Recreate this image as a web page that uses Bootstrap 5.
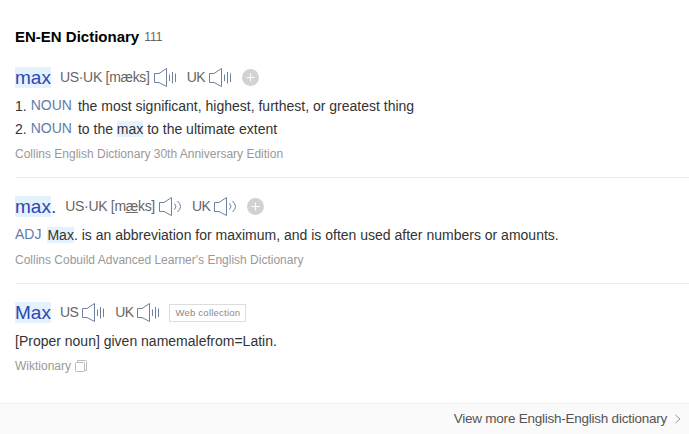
<!DOCTYPE html>
<html lang="en">
<head>
<meta charset="utf-8">
<meta name="viewport" content="width=device-width, initial-scale=1">
<title>EN-EN Dictionary</title>
<link href="https://cdn.jsdelivr.net/npm/bootstrap@5.3.0/dist/css/bootstrap.min.css" rel="stylesheet">
<style>
body{font-family:"Liberation Sans",Arial,sans-serif;font-size:14px;color:#333;background:#fff}
.dict{height:434px}
.dict-head{height:49px;padding:24px 15px 0;line-height:25px}
.dict-head h1{font-size:15px;line-height:25px;color:#000}
.dict-head span{font-size:12px;color:#666;margin-left:5px;line-height:27px}
.entry{padding:16px 0 13px;margin:0 0 0 15px;border-bottom:1px solid #ededed}
.entry:last-child{border-bottom:0}
.head-row{height:25px;color:#666;margin-bottom:5px;line-height:25px;letter-spacing:-.3px}
.region{letter-spacing:-.6px}
.headword{font-size:19px;line-height:21px;color:#2b46b8;margin-right:9px;letter-spacing:0}
.hit{background:#e3f2fd}
.speaker{width:25px;height:25px;margin:0 9px 0 3px;flex:none;fill:none;stroke:#6f819f}
.sense{line-height:23px}
.pos{color:#5f7da8;margin:0 6px 0 4px;position:relative;top:-1px}
.pos.first{margin-left:0}
.source{font-size:12px;line-height:20px;margin-top:3px;color:#999}
.add-btn{width:17px;height:17px;flex:none}
.tag{font-size:9.5px;letter-spacing:.24px;line-height:16px;height:18px;padding:0 5px;border:1px solid #ddd;color:#888}
.more{height:31px;font-size:13.5px;letter-spacing:-.24px;background:#fafafa;border-top:1px solid #eee;color:#555;padding-right:8px}
</style>
</head>
<body>
<svg class="d-none">
<symbol id="cone" viewBox="0 0 25 25"><path d="M1.5 17.5V8.5H6L13.5 3.5V21.5L6 17.5H1.5"/></symbol>
<symbol id="bars" viewBox="0 0 25 25"><path d="M16.5 9.5V16M19.5 7V18.5M22.5 8.5V17"/></symbol>
<symbol id="waves" viewBox="0 0 25 25"><path d="M16.5 9.5Q19.5 12.5 16.5 15.5M19.5 7Q25.5 12.5 19.5 18"/></symbol>
<symbol id="plus" viewBox="0 0 17 17"><circle cx="8.5" cy="8.5" r="8.5" fill="#d2d2d2"/><path d="M4.5 8.5H12.5M8.5 4.5V12.5" stroke="#fff" fill="none"/></symbol>
</svg>
<main class="dict d-flex flex-column">
<header class="dict-head d-flex"><h1 class="fw-bold mb-0">EN-EN Dictionary</h1><span>111</span></header>
<div class="flex-grow-1">
<section class="entry">
<div class="head-row d-flex align-items-center"><span class="headword hit">max</span><span>US·UK [mæks]</span><svg class="speaker"><use href="#cone"/><use href="#bars"/></svg><span class="region">UK</span><svg class="speaker"><use href="#cone"/><use href="#bars"/></svg><svg class="add-btn"><use href="#plus"/></svg></div>
<div class="sense">1.<span class="pos">NOUN</span>the most significant, highest, furthest, or greatest thing</div>
<div class="sense">2.<span class="pos">NOUN</span>to the <span class="hit">max</span> to the ultimate extent</div>
<div class="source">Collins English Dictionary 30th Anniversary Edition</div>
</section>
<section class="entry">
<div class="head-row d-flex align-items-center"><span class="headword"><span class="hit">max</span>.</span><span>US·UK [m<u>æ</u>ks]</span><svg class="speaker"><use href="#cone"/><use href="#waves"/></svg><span class="region">UK</span><svg class="speaker"><use href="#cone"/><use href="#waves"/></svg><svg class="add-btn"><use href="#plus"/></svg></div>
<div class="sense"><span class="pos first">ADJ</span><span class="hit">Max</span>. is an abbreviation for maximum, and is often used after numbers or amounts.</div>
<div class="source">Collins Cobuild Advanced Learner's English Dictionary</div>
</section>
<section class="entry">
<div class="head-row d-flex align-items-center"><span class="headword hit">Max</span><span class="region">US</span><svg class="speaker"><use href="#cone"/><use href="#bars"/></svg><span class="region">UK</span><svg class="speaker me-2"><use href="#cone"/><use href="#bars"/></svg><span class="tag">Web collection</span></div>
<div class="sense">[Proper noun] given namemalefrom=Latin.</div>
<div class="source d-flex align-items-center">Wiktionary<svg class="ms-1" width="12" height="12" fill="none" stroke="#bbb"><rect x=".5" y="2.5" width="9" height="9" rx="1"/><path d="M2.5 2V.5H10.5Q11.5.5 11.5 1.5V10.5H10"/></svg></div>
</section>
</div>
<footer class="more d-flex align-items-center justify-content-end"><span>View more English-English dictionary</span><svg class="ms-2" width="6" height="10" fill="none" stroke="#999"><path d="M.5 1L5 5L.5 9"/></svg></footer>
</main>
<script src="https://cdn.jsdelivr.net/npm/bootstrap@5.3.0/dist/js/bootstrap.bundle.min.js"></script>
</body>
</html>
